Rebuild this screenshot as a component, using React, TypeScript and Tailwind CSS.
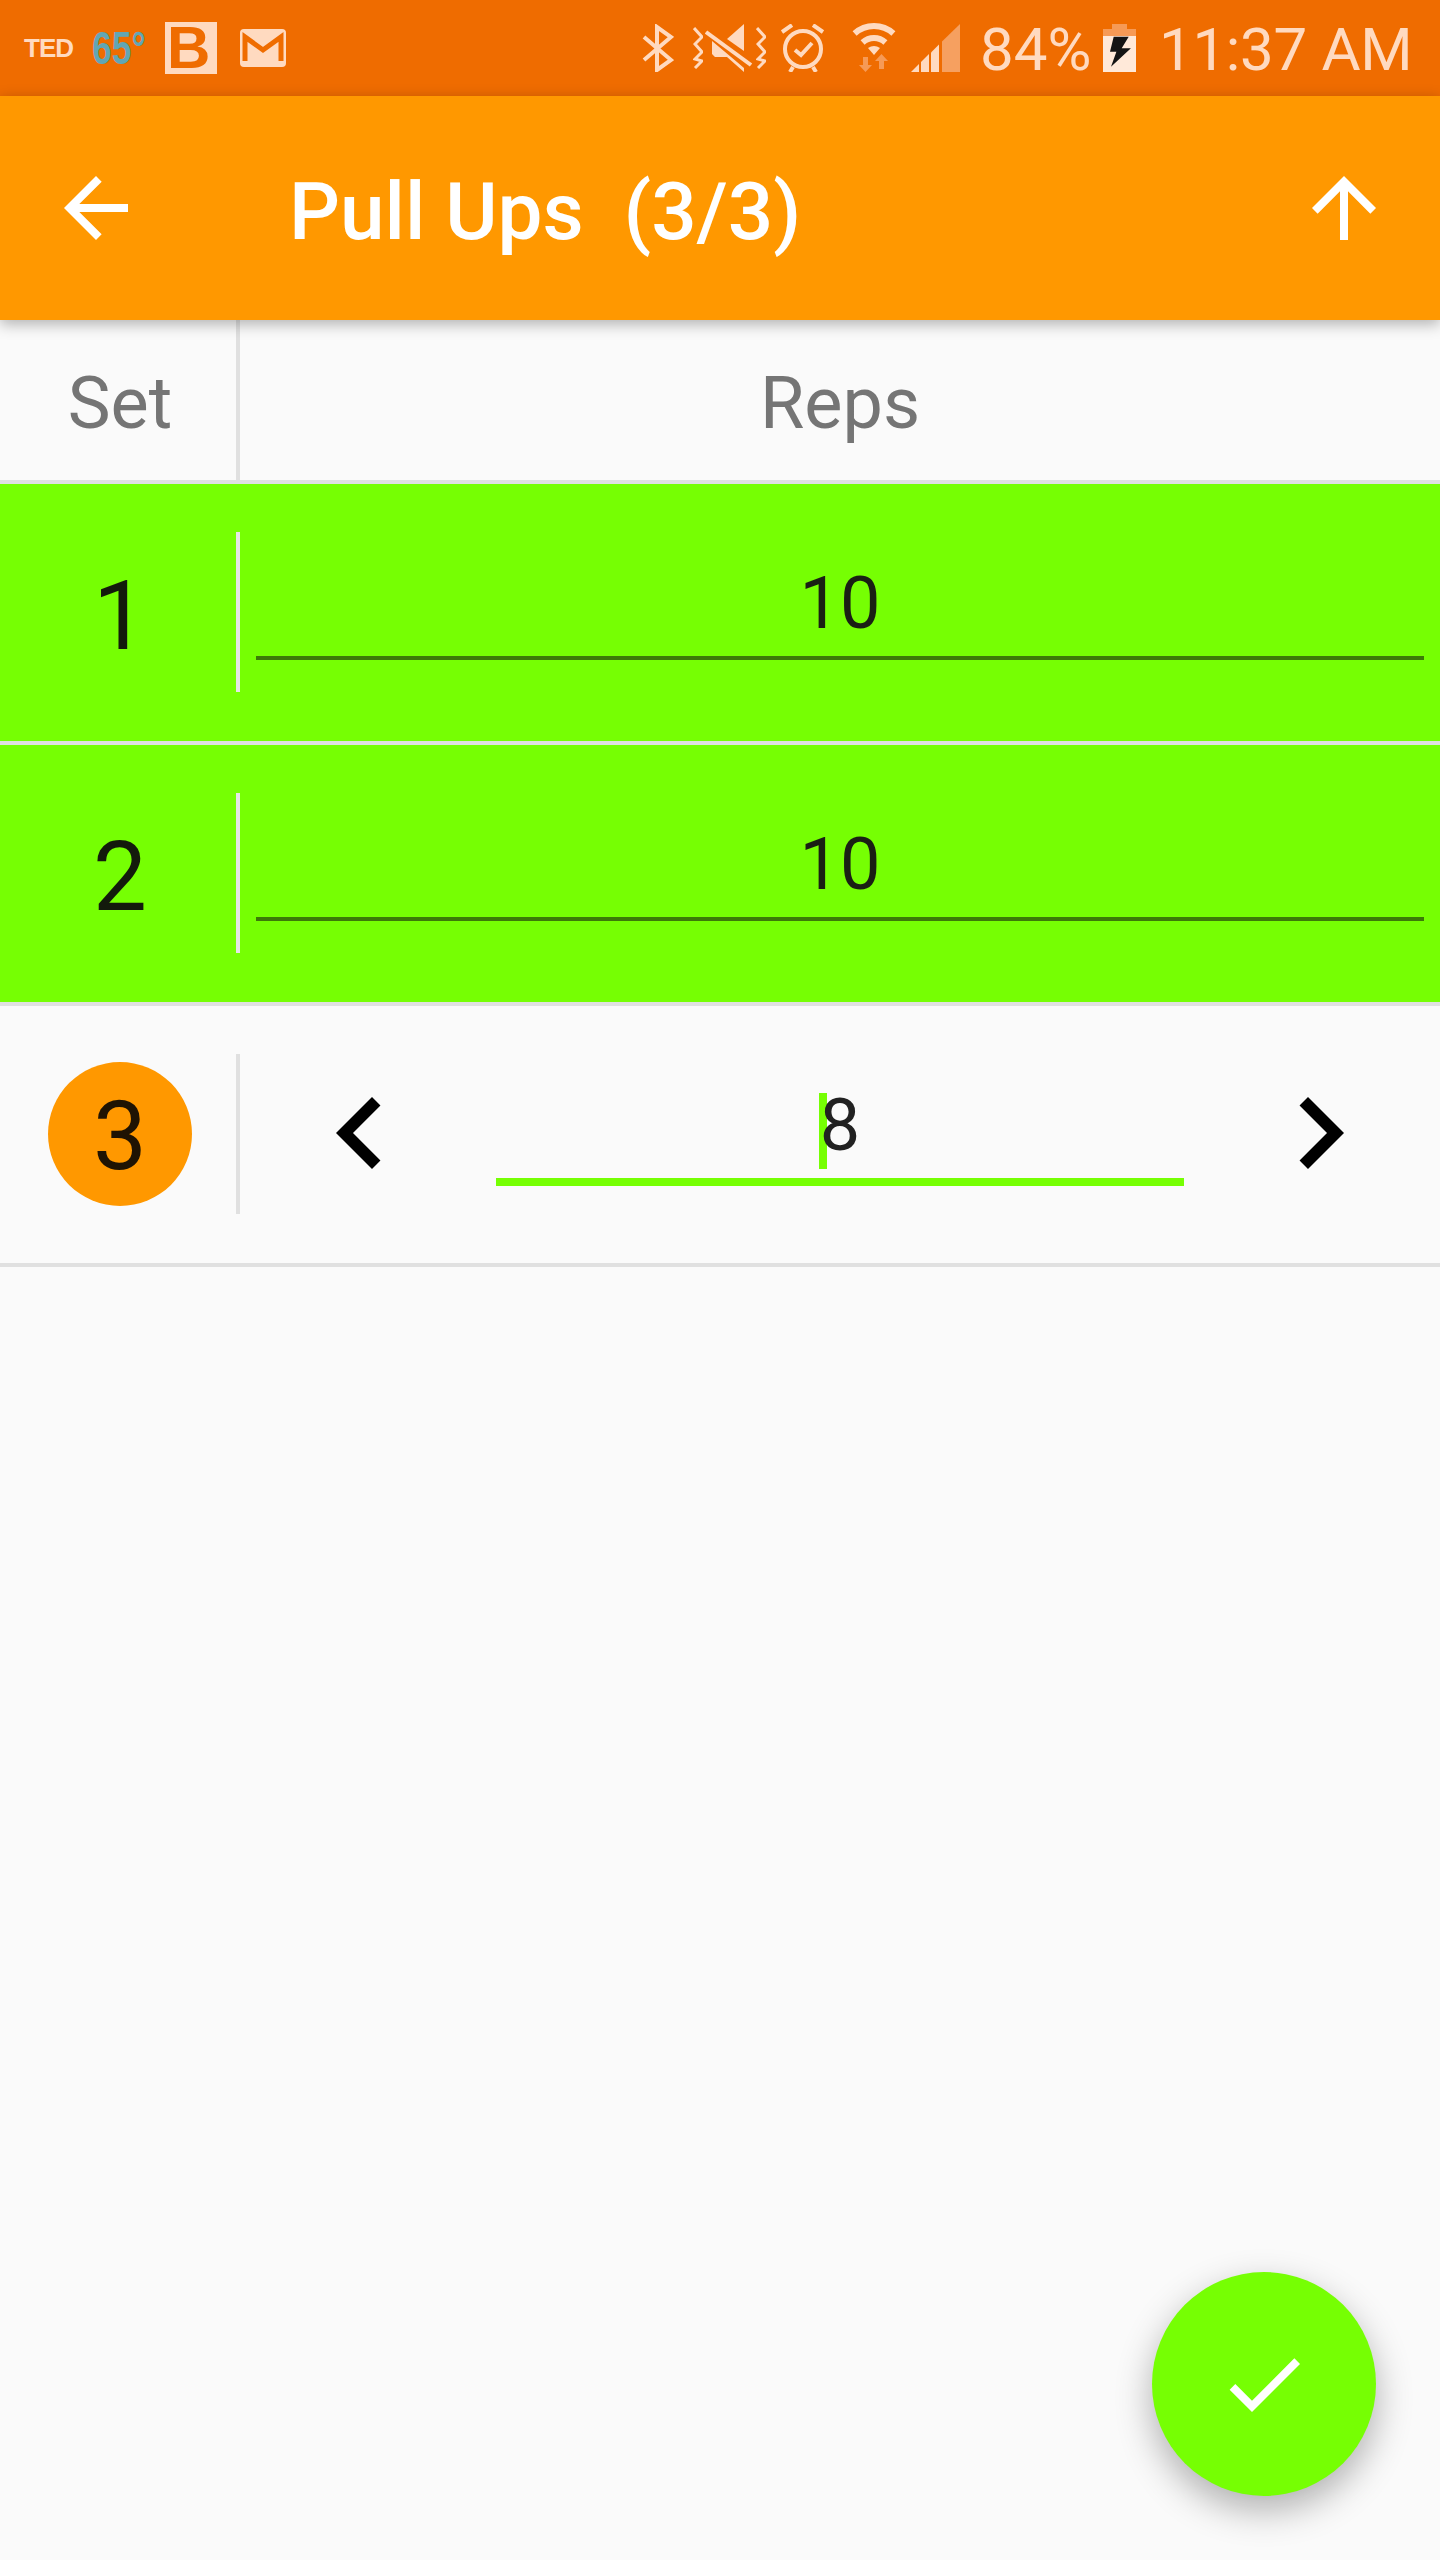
const ROBOTO = "font-['Roboto',sans-serif]";

const DONE_SETS = [
  { set: "1", reps: "10" },
  { set: "2", reps: "10" },
];

function StatusIcons() {
  return (
    <>
      {/* bluetooth */}
      <svg width="32" height="48" viewBox="0 0 32 48" className="ml-[356px] shrink-0">
        <path d="M2 13 L29 36 L15 46 V3 L29 13 L2 36" fill="none" stroke="currentColor" strokeWidth="4" />
      </svg>
      {/* vibrate + mute */}
      <svg width="10" height="42" viewBox="0 0 10 42" className="ml-[19px] shrink-0">
        <path d="M1 1 L9 10 L2 17 L9 25 L2 32 L9 34 L2 41" fill="none" stroke="currentColor" strokeWidth="3" />
      </svg>
      <svg width="50" height="48" viewBox="0 0 50 48" className="ml-[2px] shrink-0">
        <path d="M39 0 L22 15 L39 27 Z" fill="currentColor" />
        <path d="M7 17 L32 38 L39 44 V48 L22 33 H10 L7 30 Z" fill="currentColor" />
        <path d="M1 8 L46 41" stroke="currentColor" strokeWidth="4" fill="none" />
      </svg>
      <svg width="10" height="42" viewBox="0 0 10 42" className="ml-[1px] shrink-0">
        <path d="M1 1 L9 10 L2 17 L9 25 L2 32 L9 34 L2 41" fill="none" stroke="currentColor" strokeWidth="3" />
      </svg>
      {/* alarm */}
      <svg width="44" height="48" viewBox="0 0 44 48" className="ml-[15px] shrink-0">
        <circle cx="22" cy="25" r="18" fill="none" stroke="currentColor" strokeWidth="4" />
        <path d="M1 8 L11 1 M32 1 L42 8 M12 43 L9 48 M32 43 L35 48" stroke="currentColor" strokeWidth="4" fill="none" />
        <path d="M14 26 L20 31 L31 19" stroke="currentColor" strokeWidth="4" fill="none" />
      </svg>
      {/* wifi */}
      <svg width="44" height="50" viewBox="0 0 44 50" className="ml-[27px] shrink-0">
        <path d="M2.6 10.5 A29 29 0 0 1 41.4 10.5" fill="none" stroke="currentColor" strokeWidth="6" />
        <path d="M10.6 19.4 A17 17 0 0 1 33.4 19.4" fill="none" stroke="currentColor" strokeWidth="6" />
        <path d="M22 32 L16 25 Q22 21 28 25 Z" fill="currentColor" />
        <path d="M11 34 H16 V42 H20 L13.5 49 L7 42 H11 Z" fill="#f69a56" />
        <path d="M29.5 31 L36 38 H32 V46 H27 V38 H23 Z" fill="#f69a56" />
      </svg>
      {/* signal */}
      <svg width="49" height="48" viewBox="0 0 49 48" className="ml-[15px] shrink-0">
        <path d="M0 48 L8 40 V48 Z" fill="currentColor" />
        <path d="M10 48 V38 L18 30 V48 Z" fill="currentColor" />
        <path d="M20 48 V28.4 L28 20.6 V48 Z" fill="currentColor" />
        <path d="M31 48 V17.6 L49 0 V48 Z" fill="#f6a060" />
      </svg>
    </>
  );
}

function BatteryIcon() {
  return (
    <svg width="33" height="48" viewBox="0 0 33 48" className="shrink-0">
      <path d="M9 0 H24 V5 H33 V12 H0 V5 H9 Z" fill="#f69a56" />
      <path d="M0 12 H33 V48 H0 Z" fill="#ffe9d9" />
      <path d="M10.7 12.7 H25.7 L18.7 24.3 H27.9 L8 42.7 L13.4 27.7 H7 Z" fill="#141414" />
    </svg>
  );
}

function StatusBar() {
  return (
    <div className="flex h-24 shrink-0 items-center bg-[#ef6c00] text-[#ffdac0]">
      <span className="ml-6 w-[68px] font-['Liberation_Sans',sans-serif] text-[26px] font-bold tracking-[-1px]">TED</span>
      <span className="w-[73px] origin-left scale-x-[0.77] font-['Liberation_Sans',sans-serif] text-[46px] font-bold whitespace-nowrap text-[#62a6b4]">65°</span>
      <div className="flex h-[52px] w-[52px] shrink-0 items-center justify-start border-[2px] border-[#ffdac0] bg-[#ffdac0] font-['Liberation_Sans',sans-serif] text-[60px] leading-[48px] font-bold text-[#ef6c00]">
        B
      </div>
      <svg width="46" height="38" viewBox="0 0 46 38" className="ml-[23px] shrink-0">
        <rect width="46" height="38" rx="4" fill="currentColor" />
        <path d="M5 32 V8 L23 21 L41 8 V32" fill="none" stroke="#ef6c00" strokeWidth="5" />
      </svg>
      <StatusIcons />
      <span className={`ml-[20px] w-[123px] pt-1 ${ROBOTO} text-[60px] font-normal`}>84%</span>
      <BatteryIcon />
      <span className={`ml-[23px] pt-1 ${ROBOTO} text-[60px] font-normal tracking-[-0.3px] whitespace-nowrap`}>11:37 AM</span>
    </div>
  );
}

function AppBar() {
  return (
    <div className="relative z-10 flex h-[224px] shrink-0 items-center bg-[#ff9800] text-white shadow-[0_4px_14px_rgba(0,0,0,0.3)]">
      <svg width="96" height="96" viewBox="0 0 24 24" fill="currentColor" className="ml-12 shrink-0">
        <path d="M20 11H7.83l5.59-5.59L12 4l-8 8 8 8 1.41-1.41L7.83 13H20v-2z" />
      </svg>
      <span className={`ml-[145px] pt-2 ${ROBOTO} text-[80px] font-medium whitespace-pre`}>Pull Ups  (3/3)</span>
      <svg width="96" height="96" viewBox="0 0 24 24" fill="currentColor" className="mr-12 ml-auto shrink-0">
        <path d="M4 12l1.41 1.41L11 7.83V20h2V7.83l5.58 5.59L20 12l-8-8-8 8z" />
      </svg>
    </div>
  );
}

function DoneRow({ set, reps }: { set: string; reps: string }) {
  return (
    <div className="box-content flex h-[256px] items-center border-b-4 border-[#e0e0e0] bg-[#76ff03] pb-px">
      <div className={`w-[236px] pt-2 pl-1 text-center ${ROBOTO} text-[96px] text-[#131a0c]`}>{set}</div>
      <div className="h-40 w-1 bg-[#e6e6e6]" />
      <div className="h-40 flex-1 px-4">
        <div className={`flex h-32 items-center justify-center border-b-4 border-[#3c7a08] pt-5 ${ROBOTO} text-[72px] text-[#1a1f14]`}>
          {reps}
        </div>
      </div>
    </div>
  );
}

function ActiveRow() {
  return (
    <div className="box-content flex h-[256px] items-center border-b-4 border-[#e0e0e0] pb-px">
      <div className="flex w-[236px] justify-center pl-1">
        <div className={`flex h-36 w-36 items-center justify-center rounded-full bg-[#ff9800] pt-1 ${ROBOTO} text-[96px] text-[#1f1303]`}>
          3
        </div>
      </div>
      <div className="h-40 w-1 bg-[#e0e0e0]" />
      <div className="flex h-40 flex-1 items-start gap-16 pr-12 pl-12">
        <svg width="144" height="144" viewBox="0 0 24 24" className="mt-[7px] shrink-0">
          <path d="M15.41 7.41L14 6l-6 6 6 6 1.41-1.41L10.83 12z" />
        </svg>
        <div className={`flex h-[132px] flex-1 items-center justify-center border-b-8 border-[#76ff03] pt-5 ${ROBOTO} text-[72px] text-[#212121]`}>
          <span className="relative isolate">
            <span className="absolute top-[21px] -left-[1px] -z-10 h-[76px] w-2 bg-[#76ff03]" />8
          </span>
        </div>
        <svg width="144" height="144" viewBox="0 0 24 24" className="mt-[7px] shrink-0">
          <path d="M10 6L8.59 7.41 13.17 12l-4.58 4.59L10 18l6-6z" />
        </svg>
      </div>
    </div>
  );
}

export default function App() {
  return (
    <div className="relative flex h-[2560px] w-[1440px] flex-col overflow-hidden bg-[#fafafa]">
      <StatusBar />
      <AppBar />

      {/* Table header */}
      <div className={`box-content flex h-40 items-center border-b-4 border-[#e0e0e0] ${ROBOTO} text-[72px] text-[#757575]`}>
        <div className="w-[236px] pt-2 pl-1 text-center">Set</div>
        <div className="h-40 w-1 bg-[#e0e0e0]" />
        <div className="flex-1 pt-2 text-center">Reps</div>
      </div>

      {DONE_SETS.map((row) => (
        <DoneRow key={row.set} set={row.set} reps={row.reps} />
      ))}
      <ActiveRow />

      {/* FAB */}
      <button className="absolute right-16 bottom-16 flex h-56 w-56 items-center justify-center rounded-full bg-[#76ff03] text-white shadow-[0_14px_36px_rgba(0,0,0,0.3)]">
        <svg width="96" height="96" viewBox="0 0 24 24" fill="currentColor">
          <path d="M9 16.17L4.83 12l-1.42 1.41L9 19 21 7l-1.41-1.41z" />
        </svg>
      </button>
    </div>
  );
}
